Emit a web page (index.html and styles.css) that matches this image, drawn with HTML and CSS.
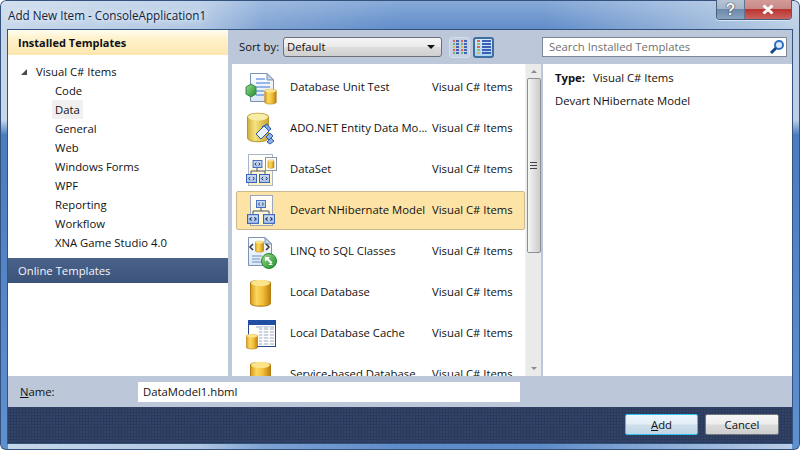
FILE: index.html
```html
<!DOCTYPE html>
<html lang="en">
<head>
<meta charset="utf-8">
<title>Add New Item - ConsoleApplication1</title>
<link rel="stylesheet" href="styles.css">
</head>
<body>
<svg class="defs" width="0" height="0" aria-hidden="true">
  <defs>
    <linearGradient id="gold" x1="0" x2="1" y1="0" y2="0">
      <stop offset="0" stop-color="#d99a1c"/><stop offset=".3" stop-color="#fbd75e"/><stop offset=".6" stop-color="#f3c23c"/><stop offset="1" stop-color="#bd7d10"/>
    </linearGradient>
    <linearGradient id="pale" x1="0" x2="1" y1="0" y2="0">
      <stop offset="0" stop-color="#cfae3c"/><stop offset=".35" stop-color="#f6e27e"/><stop offset="1" stop-color="#c9a42f"/>
    </linearGradient>
    <linearGradient id="page" x1="0" x2="0" y1="0" y2="1">
      <stop offset="0" stop-color="#ffffff"/><stop offset="1" stop-color="#dbe6f3"/>
    </linearGradient>
    <linearGradient id="cream" x1="0" x2="0" y1="0" y2="1">
      <stop offset="0" stop-color="#ffffff"/><stop offset="1" stop-color="#fdf2bd"/>
    </linearGradient>
    <linearGradient id="node" x1="0" x2="0" y1="0" y2="1">
      <stop offset="0" stop-color="#cfdcf3"/><stop offset="1" stop-color="#a9c0e8"/>
    </linearGradient>
    <linearGradient id="green" x1="0" x2="1" y1="0" y2="1">
      <stop offset="0" stop-color="#9fdc8c"/><stop offset="1" stop-color="#1e8a2c"/>
    </linearGradient>
    <symbol id="cyl" viewBox="0 0 20 28">
      <path d="M.5 4.500C.5 1.500 19.500 1.500 19.500 4.500V23.500C19.500 27.500 .5 27.500 .5 23.500Z" fill="url(#gold)" stroke="#b57e14"/>
      <ellipse cx="10" cy="4.500" rx="9" ry="3" fill="#fbe48a"/>
    </symbol>
    <symbol id="mini" viewBox="0 0 11 9">
      <rect x=".5" y=".5" width="10" height="8" fill="url(#node)" stroke="#3a63bb"/>
      <path d="M4.200 3 2.600 4.500 4.200 6M6.800 3 8.400 4.500 6.800 6" fill="none" stroke="#17305f"/>
    </symbol>
  </defs>
</svg>

<div class="frame">
  <header class="titlebar">
    <span class="title-text">Add New Item - ConsoleApplication1</span>
    <div class="caption">
      <span class="cap cap-help">?</span>
      <span class="cap cap-close">
        <svg width="14" height="11" viewBox="0 0 14 11"><path d="M2.500 1.500 11.500 9.500M11.500 1.500 2.500 9.500" stroke="#fff" stroke-width="3" fill="none"/></svg>
      </span>
    </div>
  </header>

  <div class="client">
    <div class="main">
      <aside class="side">
        <div class="side-head">Installed Templates</div>
        <ul class="tree">
          <li class="tree-root"><span class="tree-arrow"></span>Visual C# Items</li>
          <li class="tree-item"><span>Code</span></li>
          <li class="tree-item tree-current"><span>Data</span></li>
          <li class="tree-item"><span>General</span></li>
          <li class="tree-item"><span>Web</span></li>
          <li class="tree-item"><span>Windows Forms</span></li>
          <li class="tree-item"><span>WPF</span></li>
          <li class="tree-item"><span>Reporting</span></li>
          <li class="tree-item"><span>Workflow</span></li>
          <li class="tree-item"><span>XNA Game Studio 4.0</span></li>
        </ul>
        <div class="side-online">Online Templates</div>
        <div class="side-rest"></div>
      </aside>

      <section class="content">
        <div class="toolbar">
          <span class="sort-label">Sort by:</span>
          <div class="select"><span>Default</span><i class="select-arrow"></i></div>
          <button class="view" type="button">
            <svg width="16" height="15" viewBox="0 0 16 15">
              <path d="M1 1h2M1 10h2M9 1h2M9 10h2" stroke="#e2563e" stroke-width="2"/>
              <path d="M1 4h2M1 13h2M9 4h2M9 13h2" stroke="#6cb25a" stroke-width="2"/>
              <path d="M1 7h2M9 7h2" stroke="#e8b33c" stroke-width="2"/>
              <path d="M4 1h3M4 4h3M4 7h3M4 10h3M4 13h3M12 1h3M12 4h3M12 7h3M12 10h3M12 13h3" stroke="#3558b0" stroke-width="2"/>
            </svg>
          </button>
          <button class="view view-on" type="button">
            <svg width="16" height="15" viewBox="0 0 16 15">
              <path d="M1 1h3M1 7h3" stroke="#e2563e" stroke-width="2"/>
              <path d="M1 4h3M1 10h3" stroke="#8fbf4e" stroke-width="2"/>
              <path d="M1 13h3" stroke="#e8b33c" stroke-width="2"/>
              <path d="M6 1h9M6 4h9M6 7h9M6 10h9M6 13h9" stroke="#2f52ad" stroke-width="2"/>
            </svg>
          </button>
          <div class="search">
            <span>Search Installed Templates</span>
            <svg width="16" height="16" viewBox="0 0 16 16">
              <circle cx="10" cy="6" r="4" fill="#dcebfa" stroke="#2f6fc0" stroke-width="2"/>
              <path d="M7 9 2 14" stroke="#15458e" stroke-width="3"/>
            </svg>
          </div>
        </div>

        <div class="body">
          <div class="list">
            <div class="rows">
              <div class="row">
                <svg class="ico" viewBox="0 0 32 32">
                  <path d="M4.500 1.500H21L27.500 8V29.500H4.500Z" fill="url(#page)" stroke="#7d93b3"/>
                  <path d="M21 1.500V8H27.500Z" fill="#c8d6e8" stroke="#7d93b3"/>
                  <path d="M10 7h9M10 11h14M10 15h14M10 19h8M10 23h8" stroke="#3f74d6"/>
                  <path d="M5 12 10 15V22L5 25 0 22V15Z" fill="url(#green)" stroke="#2f8b46"/>
                  <use href="#cyl" x="18" y="16" width="13" height="17"/>
                </svg>
                <span class="name">Database Unit Test</span><span class="cat">Visual C# Items</span>
              </div>
              <div class="row">
                <svg class="ico" viewBox="0 0 32 32">
                  <path d="M1.500 4C1.500 -1 22.500 -1 22.500 4V25C22.500 30 1.500 30 1.500 25Z" fill="url(#pale)" stroke="#b7962b"/>
                  <ellipse cx="12" cy="4" rx="10" ry="3.500" fill="#f8eda6"/>
                  <path d="M16 14 21 11 25 16 20 20Z" fill="#7fa6e4" stroke="#2c5aa8"/>
                  <path d="M10 21 18 13 23 18 15 26Z" fill="#e8f0fb" stroke="#2c5aa8"/>
                  <path d="M20 24 24 20 27 23 23 27ZM21 29 25 25 28 28 24 31Z" fill="#8db2ea" stroke="#2c5aa8"/>
                </svg>
                <span class="name">ADO.NET Entity Data Mo...</span><span class="cat">Visual C# Items</span>
              </div>
              <div class="row">
                <svg class="ico" viewBox="0 0 32 32">
                  <rect x="2.500" y=".5" width="24" height="31" fill="url(#cream)" stroke="#a9b6c8"/>
                  <path d="M11 13V17M5 17H19M5 17V20M19 17V20" stroke="#555" fill="none"/>
                  <use href="#mini" x="6" y="6" width="11" height="8"/>
                  <use href="#mini" x="0" y="20" width="11" height="9"/>
                  <use href="#mini" x="13" y="20" width="11" height="9"/>
                  <rect x="19.500" y="3.500" width="11" height="13" fill="#fff" stroke="#8795a8"/>
                  <use href="#cyl" x="21.500" y="4.500" width="7" height="11"/>
                </svg>
                <span class="name">DataSet</span><span class="cat">Visual C# Items</span>
              </div>
              <div class="row row-sel">
                <svg class="ico" viewBox="0 0 32 32">
                  <rect x="4.500" y=".5" width="22" height="30" fill="url(#cream)" stroke="#9aa7bb"/>
                  <path d="M15 13V16M7 16H23M7 16V19M23 16V19" stroke="#555" fill="none"/>
                  <use href="#mini" x="9" y="5" width="12" height="8"/>
                  <use href="#mini" x="1" y="19" width="12" height="10"/>
                  <use href="#mini" x="17" y="19" width="12" height="10"/>
                </svg>
                <span class="name">Devart NHibernate Model</span><span class="cat">Visual C# Items</span>
              </div>
              <div class="row">
                <svg class="ico" viewBox="0 0 32 32">
                  <path d="M2.500 1.500H19L25.500 8V29.500H2.500Z" fill="url(#page)" stroke="#7d93b3"/>
                  <path d="M19 1.500V8H25.500Z" fill="#c8d6e8" stroke="#7d93b3"/>
                  <use href="#cyl" x="9" y="4" width="9" height="13"/>
                  <path d="M7 8 4 11 7 14M20 8 23 11 20 14" fill="none" stroke="#333" stroke-width="1.500"/>
                  <path d="M6 20h10M6 23h8M6 26h12" stroke="#6c8fc9"/>
                  <circle cx="23" cy="25" r="7.500" fill="url(#green)" stroke="#1c8a2b"/>
                  <path d="M19 21h5l-1.500 1.500 4 4-1.500 1.500-4-4L19 25.500ZM27.500 29h-5l1.500-1.500" fill="#fff"/>
                </svg>
                <span class="name">LINQ to SQL Classes</span><span class="cat">Visual C# Items</span>
              </div>
              <div class="row">
                <svg class="ico" viewBox="0 0 32 32"><use href="#cyl" x="4" y="1" width="21" height="30"/></svg>
                <span class="name">Local Database</span><span class="cat">Visual C# Items</span>
              </div>
              <div class="row">
                <svg class="ico" viewBox="0 0 32 32">
                  <rect x="2.500" y="2.500" width="27" height="26" fill="#fff" stroke="#24488f"/>
                  <rect x="2" y="2" width="28" height="5" fill="#1f4ea3"/>
                  <path d="M13 11H28M13 14H28M13 17H28M13 20H28M13 23H28M13 26H28M10 9H28" stroke="#9aa9bf"/>
                  <path d="M17 9V27M23 9V27" stroke="#fff" stroke-width="1.500"/>
                  <use href="#cyl" x="0" y="15" width="12" height="17"/>
                </svg>
                <span class="name">Local Database Cache</span><span class="cat">Visual C# Items</span>
              </div>
              <div class="row">
                <svg class="ico" viewBox="0 0 32 32"><use href="#cyl" x="4" y="1" width="21" height="30"/></svg>
                <span class="name">Service-based Database</span><span class="cat">Visual C# Items</span>
              </div>
            </div>
            <div class="scroll">
              <i class="sc-up"></i>
              <div class="sc-thumb"><b></b></div>
              <div class="sc-track"></div>
              <i class="sc-down"></i>
            </div>
          </div>
          <div class="detail">
            <p class="detail-type"><b>Type:</b><span>Visual C# Items</span></p>
            <p class="detail-name">Devart NHibernate Model</p>
          </div>
        </div>
      </section>
    </div>

    <div class="namebar">
      <label class="name-label"><u>N</u>ame:</label>
      <div class="name-input">DataModel1.hbml</div>
    </div>

    <footer class="footer">
      <button class="btn btn-default" type="button"><u>A</u>dd</button>
      <button class="btn" type="button">Cancel</button>
    </footer>
  </div>
</div>
</body>
</html>
```

FILE: styles.css
```css
* { box-sizing: border-box; }
html, body { margin: 0; padding: 0; }
body {
  width: 800px;
  height: 450px;
  overflow: hidden;
  background: #fff;
  font: 11.3px/16px "Open Sans", "Noto Sans", sans-serif;
  color: #111;
}
.defs { display: block; width: 0; height: 0; }

.frame {
  width: 800px;
  height: 450px;
  display: flex;
  flex-direction: column;
  padding: 0 7px 6px;
  border-radius: 6px;
  box-shadow: inset 0 0 0 1px #34527e;
  background:
    linear-gradient(180deg, rgba(235,243,252,.3) 0, rgba(235,243,252,0) 30px),
    linear-gradient(180deg, rgba(190,210,235,0) 120px, #4a7cc0 135px, #5f90d0 450px) 0 0 / 8px 450px no-repeat,
    linear-gradient(180deg, rgba(190,210,235,0) 120px, #4a7cc0 135px, #5f90d0 450px) 792px 0 / 8px 450px no-repeat,
    linear-gradient(90deg, #c8d8ea 0, #b0c6e2 25%, #7ea2d3 33%, #5f8cc9 50%, #5f8cc9 68%, #9ab6da 88%, #bdd0e6 100%);
}

.titlebar {
  height: 29px;
  flex: none;
  display: flex;
  align-items: flex-start;
}
.title-text {
  margin: 7px 0 0 1px;
  font-size: 11.7px;
  color: #14233a;
  text-shadow: 0 0 6px #e6f0fb, 0 0 6px #e6f0fb;
}
.caption {
  margin-left: auto;
  margin-right: 1px;
  display: flex;
  height: 20px;
  border: 1px solid #46607f;
  border-top: 0;
  border-radius: 0 0 4px 4px;
  overflow: hidden;
  box-shadow: 0 1px 0 #dbe6f3;
}
.cap {
  height: 19px;
  display: flex;
  align-items: center;
  justify-content: center;
}
.cap-help {
  width: 28px;
  font: bold 16px/19px "Liberation Sans", sans-serif;
  color: #f4f7fb;
  text-shadow: 0 0 1px #223, 0 0 1px #223;
  background: linear-gradient(180deg, #b7c3d3 0, #a4b4c8 48%, #6d89aa 50%, #8aa3c0 100%);
  border-right: 1px solid #5d7693;
}
.cap-close {
  width: 46px;
  background: linear-gradient(180deg, #d39a98 0, #c88a88 45%, #bb3530 50%, #c9645f 100%);
}

.client {
  flex: 1;
  min-height: 0;
  display: flex;
  flex-direction: column;
  border: 1px solid #34527e;
  background: #bcc8d9;
}
.main { flex: 1; min-height: 0; display: flex; }

/* left column */
.side {
  width: 220px;
  flex: none;
  display: flex;
  flex-direction: column;
  background: #fff;
}
.side-head {
  height: 25px;
  flex: none;
  padding-left: 10px;
  font-size: 11px;
  line-height: 25px;
  font-weight: 700;
  color: #111;
  background: linear-gradient(180deg, #fffdf2 0, #fff3cf 30%, #fde6ae 100%);
}
.tree {
  flex: none;
  height: 203px;
  margin: 0;
  padding: 7px 0 0;
  list-style: none;
}
.tree-root {
  height: 19px;
  line-height: 19px;
  padding-left: 13px;
  display: flex;
  align-items: center;
}
.tree-arrow {
  width: 0;
  height: 0;
  margin-right: 9px;
  border-style: solid;
  border-width: 0 0 6px 6px;
  border-color: transparent transparent #4a4a4a transparent;
}
.tree-item {
  height: 19px;
  line-height: 19px;
  padding-left: 44px;
}
.tree-item span { display: inline-block; padding: 0 3px; }
.tree-current span { background: #f0f0f0; }
.side-online {
  height: 25px;
  flex: none;
  padding-left: 10px;
  line-height: 25px;
  color: #f4f6fa;
  background: linear-gradient(180deg, #4a6189 0, #435a82 50%, #3c5379 100%);
}
.side-rest { flex: 1; background: #fff; }

/* middle and right */
.content { flex: 1; min-width: 0; display: flex; flex-direction: column; }
.toolbar {
  height: 34px;
  flex: none;
  display: flex;
  align-items: center;
  padding: 0 5px 0 11px;
  background: #bcc8d9;
}
.sort-label { width: 44px; flex: none; color: #111; }
.select {
  width: 159px;
  height: 20px;
  flex: none;
  display: flex;
  align-items: center;
  justify-content: space-between;
  padding: 0 6px 0 3px;
  border: 1px solid #6c6f75;
  border-radius: 3px;
  background: linear-gradient(180deg, #f5f5f5 0, #ebebeb 48%, #dcdcdc 52%, #cfcfcf 100%);
}
.select-arrow {
  width: 0;
  height: 0;
  border-style: solid;
  border-width: 4px 4px 0;
  border-color: #111 transparent transparent;
}
.view {
  width: 21px;
  height: 21px;
  flex: none;
  padding: 0;
  margin: 0 0 0 7px;
  display: flex;
  align-items: center;
  justify-content: center;
  border: 1px solid #d5deea;
  border-radius: 3px;
  background: #c6d2e1;
}
.view svg { opacity: .9; }
.view-on {
  margin-left: 3px;
  border: 2px solid #3e6d9f;
  background: linear-gradient(180deg, #d4e9fa 0, #a9d3f3 100%);
}
.search {
  width: 245px;
  height: 20px;
  flex: none;
  margin-left: auto;
  display: flex;
  align-items: center;
  justify-content: space-between;
  padding: 0 1px 0 6px;
  border: 1px solid #7d8797;
  background: #fff;
  color: #6f6f6f;
}
.body { flex: 1; min-height: 0; display: flex; padding-left: 4px; }
.list {
  width: 309px;
  flex: none;
  display: flex;
  overflow: hidden;
  background: #fff;
}
.rows {
  flex: 1;
  min-width: 0;
  display: flex;
  flex-direction: column;
  gap: 2px;
  padding: 4px 0 0 4px;
  overflow: hidden;
}
.row {
  height: 39px;
  flex: none;
  display: flex;
  align-items: center;
  padding-left: 10px;
  border: 1px solid transparent;
  border-radius: 2px;
}
.row-sel {
  background: #fde4a6;
  border-color: #c8b98f;
}
.ico { width: 32px; height: 32px; flex: none; margin-left: -1px; overflow: visible; }
.name { width: 142px; flex: none; margin-left: 12px; padding-bottom: 2px; white-space: nowrap; }
.cat { flex: none; padding-bottom: 2px; white-space: nowrap; }

.scroll {
  width: 16px;
  flex: none;
  display: flex;
  flex-direction: column;
  align-items: center;
  background: #eaeaea;
  border-left: 1px solid #f2f2f2;
}
.sc-up, .sc-down {
  width: 0;
  height: 0;
  flex: none;
  border-style: solid;
  border-color: transparent;
}
.sc-up { margin: 6px 0 5px; border-width: 0 3px 3px; border-bottom-color: #8a8a8a; }
.sc-down { margin: 0 0 6px; border-width: 3px 3px 0; border-top-color: #8a8a8a; }
.sc-thumb {
  width: 14px;
  height: 175px;
  flex: none;
  display: flex;
  align-items: center;
  justify-content: center;
  border: 1px solid #8d8f93;
  border-radius: 2px;
  background: linear-gradient(90deg, #f7f7f7 0, #e3e3e3 40%, #cdcdcd 100%);
}
.sc-thumb b {
  width: 7px;
  height: 7px;
  border-top: 1px solid #444;
  border-bottom: 1px solid #444;
  background: linear-gradient(#444, #444) center / 100% 1px no-repeat;
}
.sc-track { flex: 1; }

.detail { flex: 1; margin-left: 2px; padding: 6px 0 0 12px; background: #fff; }
.detail p { margin: 0; }
.detail-type { height: 16px; display: flex; }
.detail-type b { width: 38px; flex: none; }
.detail-name { margin-top: 7px !important; }

.namebar {
  height: 31px;
  flex: none;
  display: flex;
  align-items: center;
  padding: 0 0 0 12px;
  background: #bcc8d9;
}
.name-label { width: 118px; flex: none; }
.name-input {
  width: 382px;
  height: 20px;
  flex: none;
  padding-left: 5px;
  line-height: 20px;
  background: #fff;
}

.footer {
  height: 36px;
  flex: none;
  display: flex;
  align-items: flex-start;
  justify-content: flex-end;
  gap: 7px;
  padding: 7px 13px 0 0;
  background:
    radial-gradient(circle at 1px 1px, #31436a 0.8px, transparent 1px) 0 0 / 3px 3px,
    #2b3a59;
}
.btn {
  width: 74px;
  height: 21px;
  padding: 0;
  font: inherit;
  color: #111;
  border: 1px solid #70757c;
  border-radius: 2px;
  background: linear-gradient(180deg, #f6f6f6 0, #ededed 48%, #dcdcdc 52%, #cecece 100%);
}
.btn-default {
  width: 73px;
  border-color: #2fc3ee;
  background: linear-gradient(180deg, #edf5fb 0, #e2eef7 48%, #cfe0ec 52%, #c0d5e5 100%);
}
```
